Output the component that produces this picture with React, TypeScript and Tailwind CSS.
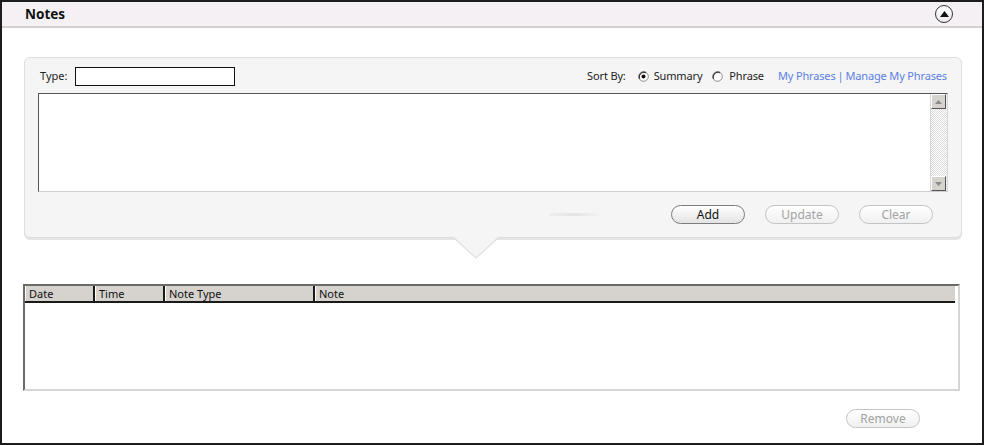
import React from "react";

const font = "font-['Segoe_UI','Noto_Sans','Open_Sans',sans-serif]";

function Radio({ checked }: { checked?: boolean }) {
  return (
    <svg width="11" height="11" viewBox="0 0 11 11" aria-hidden="true">
      <circle cx="5.5" cy="5.5" r="4.8" fill="#fff" stroke="#8a8a8a" />
      <path d="M1.6 7.8 A4.8 4.8 0 0 1 7.8 1.6" fill="none" stroke="#333" strokeWidth="1.2" />
      {checked ? <circle cx="5.5" cy="5.5" r="2" fill="#111" /> : null}
    </svg>
  );
}

function PillButton({ label, disabled }: { label: string; disabled?: boolean }) {
  return (
    <button
      type="button"
      className={
        disabled
          ? "h-[19px] w-[74px] rounded-full border border-[#c4c4c4] bg-gradient-to-b from-white to-[#f0f0f0] text-[12px] leading-none text-[#a3a3a3]"
          : "h-[19px] w-[74px] rounded-full border border-[#7d7d7d] bg-gradient-to-b from-white to-[#e4e4e4] text-[12px] leading-none text-[#111]"
      }
    >
      {label}
    </button>
  );
}

function ScrollArrow({ up }: { up?: boolean }) {
  return (
    <div className="flex h-[15px] w-[15px] items-center justify-center border border-t-white border-l-white border-r-[#555] border-b-[#555] bg-[#d6d3ce]">
      <svg width="7" height="4" viewBox="0 0 7 4" aria-hidden="true">
        <path d={up ? "M0 4 L3.5 0 L7 4 Z" : "M0 0 L3.5 4 L7 0 Z"} fill="#8c8c8c" />
      </svg>
    </div>
  );
}

export default function App() {
  const columns = [
    { label: "Date", w: "w-[70px]" },
    { label: "Time", w: "w-[70px]" },
    { label: "Note Type", w: "w-[150px]" },
  ];

  return (
    <div className={`flex h-[445px] w-[984px] flex-col border-2 border-[#1c1c1c] bg-white ${font}`}>
      <div className="flex h-[26px] items-center justify-between border-b-2 border-[#d2d0d1] bg-[#f4f0f3] pl-[23px] pr-[29px]">
        <span className="text-[13.5px] font-bold text-[#111]">Notes</span>
        <button
          type="button"
          className="flex h-[18px] w-[18px] items-center justify-center rounded-full border border-[#333] bg-gradient-to-b from-white to-[#ececec]"
        >
          <svg width="9" height="6" viewBox="0 0 9 6" aria-hidden="true">
            <path d="M0 6 L4.5 0 L9 6 Z" fill="#111" />
          </svg>
        </button>
      </div>

      <div className="mt-[29px] ml-[22px] mr-[20px] flex flex-col">
        <div className="flex h-[181px] flex-col rounded-[6px] border border-[#dedede] bg-[#f5f5f5] px-[13px] pt-[9px] shadow-[0_2px_0_#e4e4e4]">
          <div className="flex h-[19px] items-center text-[11px] text-[#222]">
            <span className="ml-[2px] w-[35px]">Type:</span>
            <div className="h-[19px] w-[160px] border border-[#111] bg-white" />
            <div className="ml-auto flex items-center tracking-[-0.15px]">
              <span>Sort By:</span>
              <span className="ml-[12px] flex">
                <Radio checked />
              </span>
              <span className="ml-[5px]">Summary</span>
              <span className="ml-[10px] flex">
                <Radio />
              </span>
              <span className="ml-[6px]">Phrase</span>
              <span className="ml-[14px] text-[#5b7fe6]">My Phrases</span>
              <span className="mx-[2px] text-[#5b7fe6]">|</span>
              <span className="mr-[1px] text-[#5b7fe6]">Manage My Phrases</span>
            </div>
          </div>

          <div className="mt-[7px] flex h-[99px] border border-t-[#555] border-l-[#555] border-r-[#d8d8d8] border-b-[#cfcfcf] bg-white">
            <div className="flex-1" />
            <div className="flex w-[17px] flex-col border-l border-[#d8d8d8] bg-[repeating-conic-gradient(#dcdcdc_0_25%,#ffffff_0_50%)] bg-[length:2px_2px]">
              <ScrollArrow up />
              <div className="flex-1" />
              <ScrollArrow />
            </div>
          </div>

          <div className="mt-[13px] flex items-center justify-end gap-[20px] pr-[15px]">
            <div className="mr-[52px] h-[3px] w-[50px] rounded-full bg-gradient-to-r from-[#eeeeee] via-[#e4e4e4] to-[#f2f2f2]" />
            <PillButton label="Add" />
            <PillButton label="Update" disabled />
            <PillButton label="Clear" disabled />
          </div>
        </div>

        <div className="flex justify-start pl-[429px]">
          <svg width="46" height="23" viewBox="0 0 46 23" className="-mt-[2px]" aria-hidden="true">
            <path d="M0 0 L23 22 L46 0 Z" fill="#f5f5f5" />
            <path d="M1 2 L23 22 L45 2" fill="none" stroke="#e0e0e0" strokeWidth="1.2" />
          </svg>
        </div>
      </div>

      <div className="mt-[25px] ml-[21px] mr-[22px] flex h-[107px] flex-col border-2 border-t-[#6a6a6a] border-l-[#6a6a6a] border-r-[#d6d6d6] border-b-[#d6d6d6] bg-white">
        <div className="mr-[3px] flex h-[17px] border-b-2 border-[#1a1a1a] bg-[#d6d3ce] text-[11px] leading-none text-[#111]">
          {columns.map((c) => (
            <div
              key={c.label}
              className={`${c.w} flex items-center border-r-2 border-r-[#1a1a1a] border-l border-l-white pl-[3px]`}
            >
              {c.label}
            </div>
          ))}
          <div className="flex flex-1 items-center border-l border-l-white pl-[3px]">Note</div>
        </div>
        <div className="flex-1" />
      </div>

      <div className="mt-[18px] flex justify-end pr-[62px]">
        <PillButton label="Remove" disabled />
      </div>
    </div>
  );
}
